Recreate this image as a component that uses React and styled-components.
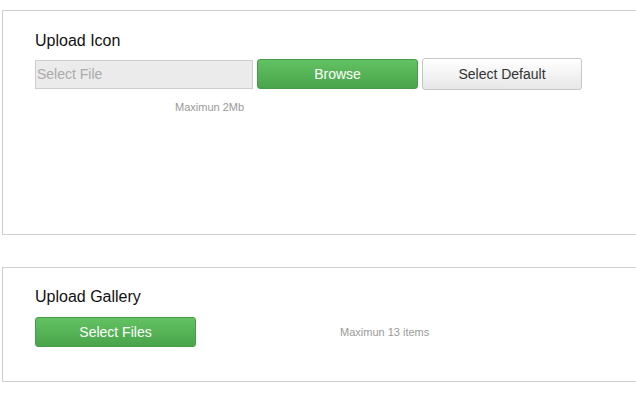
import React from 'react';
import styled, { createGlobalStyle } from 'styled-components';

const GlobalStyle = createGlobalStyle`
  html, body {
    margin: 0;
    padding: 0;
    background: #fff;
    overflow: hidden;
  }
  body {
    font-family: "Liberation Sans", Arial, sans-serif;
  }
`;

const Page = styled.div`
  padding: 10px 0 0 2px;
  width: 640px;
`;

const Panel = styled.section`
  box-sizing: border-box;
  border: 1px solid #cfcfcf;
  height: ${p => p.$height}px;
  margin-top: ${p => p.$gap || 0}px;
  padding: ${p => p.$padTop}px 32px 0;
`;

const Title = styled.h3`
  margin: 0;
  font-size: 16px;
  font-weight: normal;
  line-height: 18px;
  color: #111;
`;

const Row = styled.div`
  display: flex;
  align-items: center;
  gap: 4px;
  margin-top: ${p => p.$top}px;
`;

const FileInput = styled.div`
  box-sizing: border-box;
  width: 218px;
  height: 29px;
  border: 1px solid #cdcdcd;
  background: #ebebeb;
  color: #aaa;
  font-size: 14px;
  line-height: 27px;
  padding-left: 1px;
`;

const Button = styled.button`
  box-sizing: border-box;
  width: ${p => p.$width}px;
  height: ${p => p.$height || 30}px;
  border-radius: 3px;
  font-family: "Liberation Sans", Arial, sans-serif;
  font-size: 14px;
  padding: 0;
  cursor: pointer;
  ${p => p.$green ? `
    background: linear-gradient(#62c262, #4aa44a);
    border: 1px solid #479c47;
    color: #fff;
  ` : `
    background: linear-gradient(#ffffff, #e7e7e7);
    border: 1px solid #c6c6c6;
    color: #333;
  `}
`;

const Hint = styled.div`
  font-size: 11px;
  color: #999;
  margin-left: ${p => p.$left}px;
  margin-top: ${p => p.$top || 0}px;
`;

export default function App() {
  return (
    <>
      <GlobalStyle />
      <Page>
        <Panel $height={225} $padTop={21}>
          <Title>Upload Icon</Title>
          <Row $top={8}>
            <FileInput>Select File</FileInput>
            <Button $green $width={161}>Browse</Button>
            <Button $width={160} $height={32}>Select Default</Button>
          </Row>
          <Hint $left={140} $top={11}>Maximun 2Mb</Hint>
        </Panel>
        <Panel $height={115} $gap={32} $padTop={20}>
          <Title>Upload Gallery</Title>
          <Row $top={11}>
            <Button $green $width={161}>Select Files</Button>
            <Hint $left={140}>Maximun 13 items</Hint>
          </Row>
        </Panel>
      </Page>
    </>
  );
}
